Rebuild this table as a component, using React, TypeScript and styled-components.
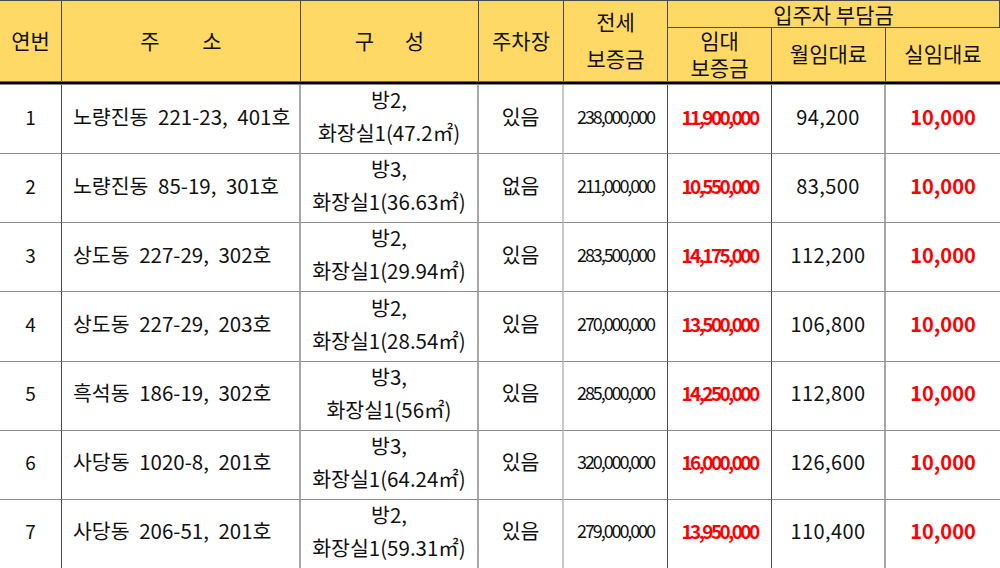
import React from "react";
import styled, { createGlobalStyle, css } from "styled-components";

const Global = createGlobalStyle`
  html, body { margin: 0; padding: 0; background: #fff; }
  body { font-family: "Noto Sans CJK KR", "Noto Sans", sans-serif; color: #111; }
`;

const DARK = "#4a4a4a";
const GRAY = "#a8a8a8";
const LIGHT = "#c8c8c8";

const Grid = styled.div`
  display: grid;
  width: 1000px;
  grid-template-columns: 62px 239px 178px 85px 104px 104px 114px 114px;
  grid-template-rows: 27px 53px 4px repeat(7, 69.15px);
  border-top: 1px solid ${DARK};
  box-sizing: border-box;
`;

const HeadCell = styled.div<{ $col: number; $span?: number; $rows?: number; $sub?: boolean; $last?: boolean; $lh?: number }>`
  grid-column: ${(p) => p.$col} / span ${(p) => p.$span ?? 1};
  grid-row: ${(p) => (p.$sub ? 2 : 1)} / span ${(p) => p.$rows ?? 1};
  background: #ffd966;
  display: flex;
  flex-direction: column;
  align-items: center;
  justify-content: center;
  font-size: 21px;
  line-height: ${(p) => p.$lh ?? 27}px;
  text-align: center;
  white-space: pre;
  box-sizing: border-box;
  padding-bottom: 2px;
  border-right: ${(p) => (p.$last ? "none" : `1px solid ${DARK}`)};
  ${(p) =>
    p.$span &&
    p.$span > 1 &&
    css`
      border-bottom: 1px solid ${DARK};
      line-height: 24px;
      padding-bottom: 0;
    `}
`;

const Wide = styled.span<{ $gap: number }>`
  word-spacing: ${(p) => p.$gap}px;
`;

const HeaderRule = styled.div`
  grid-column: 1 / -1;
  grid-row: 3;
  background: linear-gradient(#6b6450 0 1px, #000 1px 3px, #8a8a8a 3px 4px);
`;

const Cell = styled.div<{ $line: string; $align?: "left" | "center" }>`
  display: flex;
  flex-direction: column;
  justify-content: center;
  align-items: ${(p) => (p.$align === "left" ? "flex-start" : "center")};
  padding-left: ${(p) => (p.$align === "left" ? "11px" : "0")};
  padding-bottom: 6px;
  box-sizing: border-box;
  border-right: ${(p) => p.$line};
  border-bottom: 1px solid #8c8c8c;
  font-size: 20.5px;
  line-height: 33px;
  white-space: pre;
`;

const Address = styled.span`
  word-spacing: 5px;
`;

const Digits = styled.span`
  font-size: 19px;
`;

const Jeonse = styled.span`
  font-size: 18px;
  letter-spacing: -2.1px;
`;

const RedDeposit = styled.span`
  font-size: 19px;
  font-weight: 700;
  letter-spacing: -2.6px;
  color: #ff0000;
`;

const Rent = styled.span`
  font-size: 20px;
  letter-spacing: 0.4px;
`;

const RedRent = styled.span`
  font-size: 20px;
  font-weight: 700;
  color: #ff0000;
`;

type Row = {
  no: string;
  addr: string;
  room: string;
  bath: string;
  park: string;
  jeonse: string;
  dep: string;
  rent: string;
};

const rows: Row[] = [
  { no: "1", addr: "노량진동 221-23, 401호", room: "방2,", bath: "화장실1(47.2㎡)", park: "있음", jeonse: "238,000,000", dep: "11,900,000", rent: "94,200" },
  { no: "2", addr: "노량진동 85-19, 301호", room: "방3,", bath: "화장실1(36.63㎡)", park: "없음", jeonse: "211,000,000", dep: "10,550,000", rent: "83,500" },
  { no: "3", addr: "상도동 227-29, 302호", room: "방2,", bath: "화장실1(29.94㎡)", park: "있음", jeonse: "283,500,000", dep: "14,175,000", rent: "112,200" },
  { no: "4", addr: "상도동 227-29, 203호", room: "방2,", bath: "화장실1(28.54㎡)", park: "있음", jeonse: "270,000,000", dep: "13,500,000", rent: "106,800" },
  { no: "5", addr: "흑석동 186-19, 302호", room: "방3,", bath: "화장실1(56㎡)", park: "있음", jeonse: "285,000,000", dep: "14,250,000", rent: "112,800" },
  { no: "6", addr: "사당동 1020-8, 201호", room: "방3,", bath: "화장실1(64.24㎡)", park: "있음", jeonse: "320,000,000", dep: "16,000,000", rent: "126,600" },
  { no: "7", addr: "사당동 206-51, 201호", room: "방2,", bath: "화장실1(59.31㎡)", park: "있음", jeonse: "279,000,000", dep: "13,950,000", rent: "110,400" },
];

const lines = [
  `1px solid ${DARK}`,
  `2px solid ${GRAY}`,
  `2px solid ${GRAY}`,
  `2px solid ${LIGHT}`,
  `1px solid ${DARK}`,
  `1px solid ${DARK}`,
  `2px solid ${GRAY}`,
  "none",
];

export default function App() {
  return (
    <>
      <Global />
      <Grid>
        <HeadCell $col={1} $rows={2}>연번</HeadCell>
        <HeadCell $col={2} $rows={2}><Wide $gap={38}>주 소</Wide></HeadCell>
        <HeadCell $col={3} $rows={2}><Wide $gap={26}>구 성</Wide></HeadCell>
        <HeadCell $col={4} $rows={2}>주차장</HeadCell>
        <HeadCell $col={5} $rows={2} $lh={37}>{"전세\n보증금"}</HeadCell>
        <HeadCell $col={6} $span={3}>입주자 부담금</HeadCell>
        <HeadCell $col={6} $sub>{"임대\n보증금"}</HeadCell>
        <HeadCell $col={7} $sub>월임대료</HeadCell>
        <HeadCell $col={8} $sub $last>실임대료</HeadCell>
        <HeaderRule />
        {rows.map((r) => (
          <React.Fragment key={r.no}>
            <Cell $line={lines[0]}><Digits>{r.no}</Digits></Cell>
            <Cell $line={lines[1]} $align="left"><Address>{r.addr}</Address></Cell>
            <Cell $line={lines[2]}>
              <span>{r.room}</span>
              <span>{r.bath}</span>
            </Cell>
            <Cell $line={lines[3]}>{r.park}</Cell>
            <Cell $line={lines[4]}><Jeonse>{r.jeonse}</Jeonse></Cell>
            <Cell $line={lines[5]}><RedDeposit>{r.dep}</RedDeposit></Cell>
            <Cell $line={lines[6]}><Rent>{r.rent}</Rent></Cell>
            <Cell $line={lines[7]}><RedRent>10,000</RedRent></Cell>
          </React.Fragment>
        ))}
      </Grid>
    </>
  );
}
